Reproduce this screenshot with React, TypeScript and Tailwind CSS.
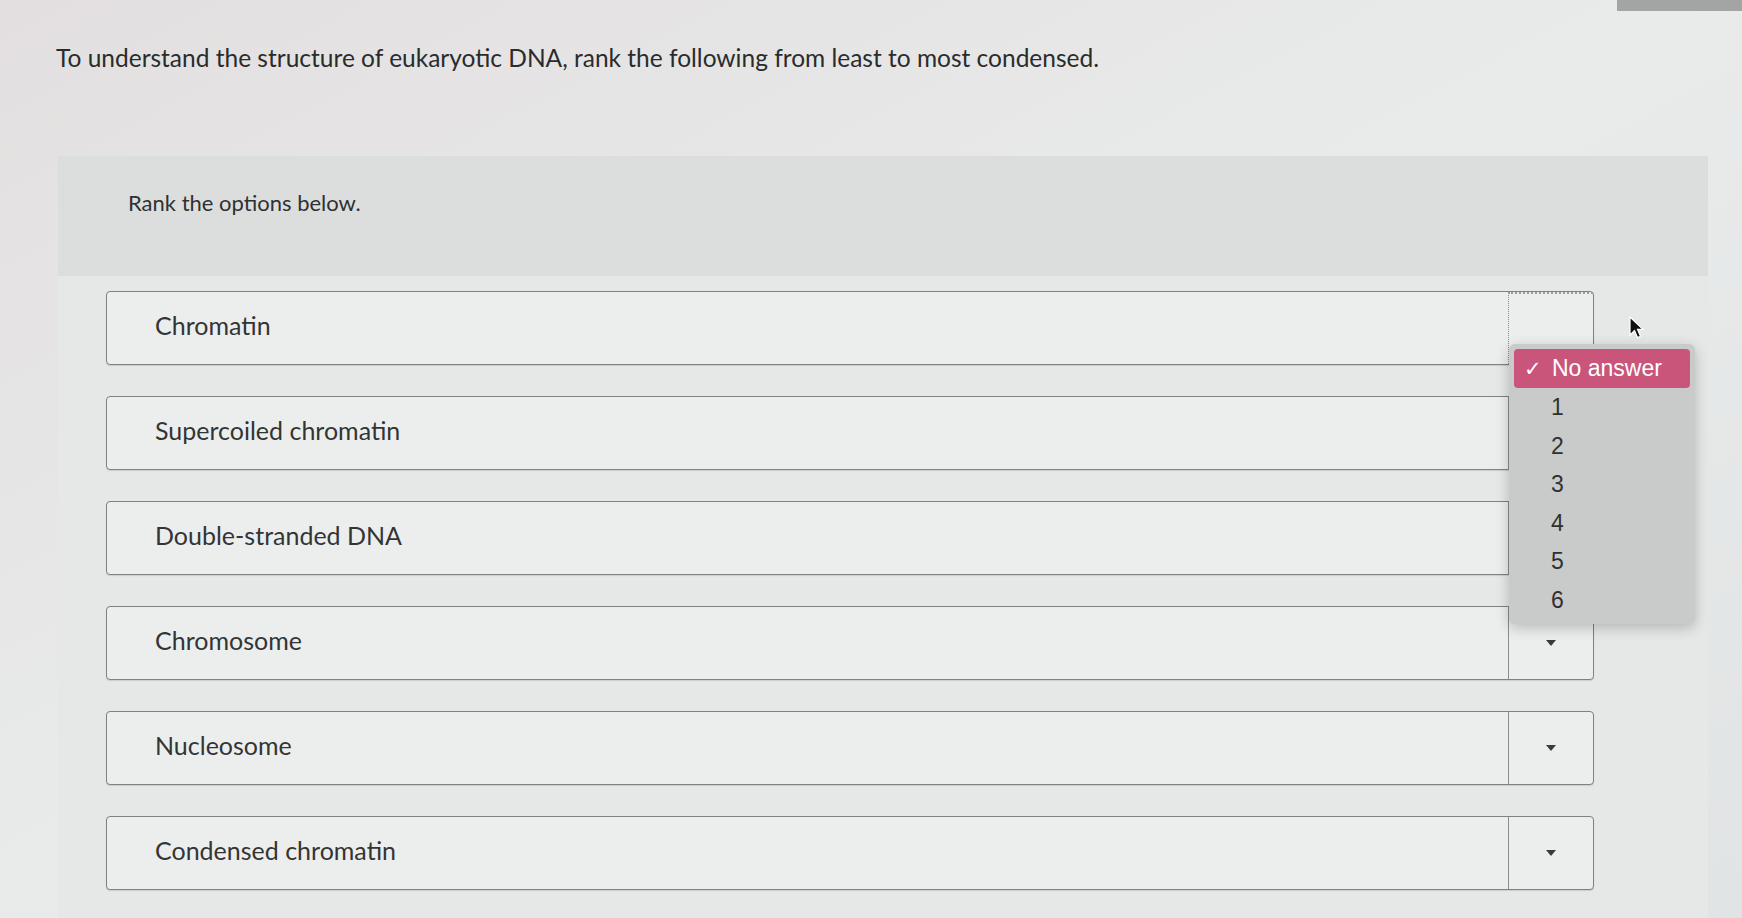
const options = [
  "Chromatin",
  "Supercoiled chromatin",
  "Double-stranded DNA",
  "Chromosome",
  "Nucleosome",
  "Condensed chromatin",
];

function Caret() {
  return (
    <svg width="12" height="8" viewBox="0 0 12 8" className="text-[#3a3c3c]">
      <path d="M1 1h10L6 7z" fill="currentColor" />
    </svg>
  );
}

function RankMenu() {
  return (
    <div className="absolute left-0 top-[50px] z-10 w-[186px] rounded-[6px] bg-[#c9cbcb] py-[5px] shadow-[0_4px_14px_rgba(0,0,0,0.22)] font-['Liberation_Sans',sans-serif] text-[23px] text-[#2f3131]">
      <div className="mx-[5px] flex h-[39px] items-center rounded-[4px] bg-[#c9557a] pl-[10px] text-white">
        <span className="w-[28px] text-[21px]">✓</span>
        <span>No answer</span>
      </div>
      {[1, 2, 3, 4, 5, 6].map((n) => (
        <div key={n} className="flex h-[38.5px] items-center pl-[42px]">
          {n}
        </div>
      ))}
    </div>
  );
}

function RankRow({ label, first }: { label: string; first?: boolean }) {
  return (
    <div className="flex h-[74px] w-[1488px] rounded-[4px] border-[1.5px] border-[#7f8282] bg-[#eceeee] shadow-[0_1px_1px_rgba(0,0,0,0.12)]">
      <div className="flex flex-1 items-center pl-[48px] pb-[4px] text-[25px] text-[#333535]">
        {label}
      </div>
      <div
        className={
          "relative flex w-[85px] items-center justify-center border-l-[1.5px] border-[#8a8d8d] " +
          (first ? "border-t-2 border-t-[#9a9c9c] border-dotted" : "")
        }
      >
        {first ? <RankMenu /> : <Caret />}
      </div>
    </div>
  );
}

export default function App() {
  return (
    <div className="relative h-[918px] w-full overflow-hidden bg-gradient-to-br from-[#e3dfe0] via-[#e9ebeb] to-[#e1e4e4] font-['Lato',sans-serif]">
      <div className="absolute right-0 top-0 h-[11px] w-[125px] bg-[#a3a5a5]" />

      <div className="pl-[56px] pt-[43px] text-[24.5px] leading-[30px] text-[#2a2c2c]">
        To understand the structure of eukaryotic DNA, rank the following from least to most condensed.
      </div>

      <div className="ml-[58px] mt-[83px] w-[1650px]">
        <div className="h-[120px] bg-[#dcdede] pl-[70px] pt-[34px] text-[22px] leading-[26px] text-[#2f3131]">
          Rank the options below.
        </div>
        <div className="flex flex-col gap-[31px] bg-[#e6e8e8] px-[48px] pt-[15px] pb-[40px]">
          {options.map((o, i) => (
            <RankRow key={o} label={o} first={i === 0} />
          ))}
        </div>
      </div>

      <svg
        className="absolute left-[1628px] top-[316px]"
        width="16"
        height="24"
        viewBox="0 0 16 24"
      >
        <path
          d="M2 1v18l4.5-4.5 3 7 3-1.3-3-6.8H15z"
          fill="#111"
          stroke="#fff"
          strokeWidth="1.2"
        />
      </svg>
    </div>
  );
}
